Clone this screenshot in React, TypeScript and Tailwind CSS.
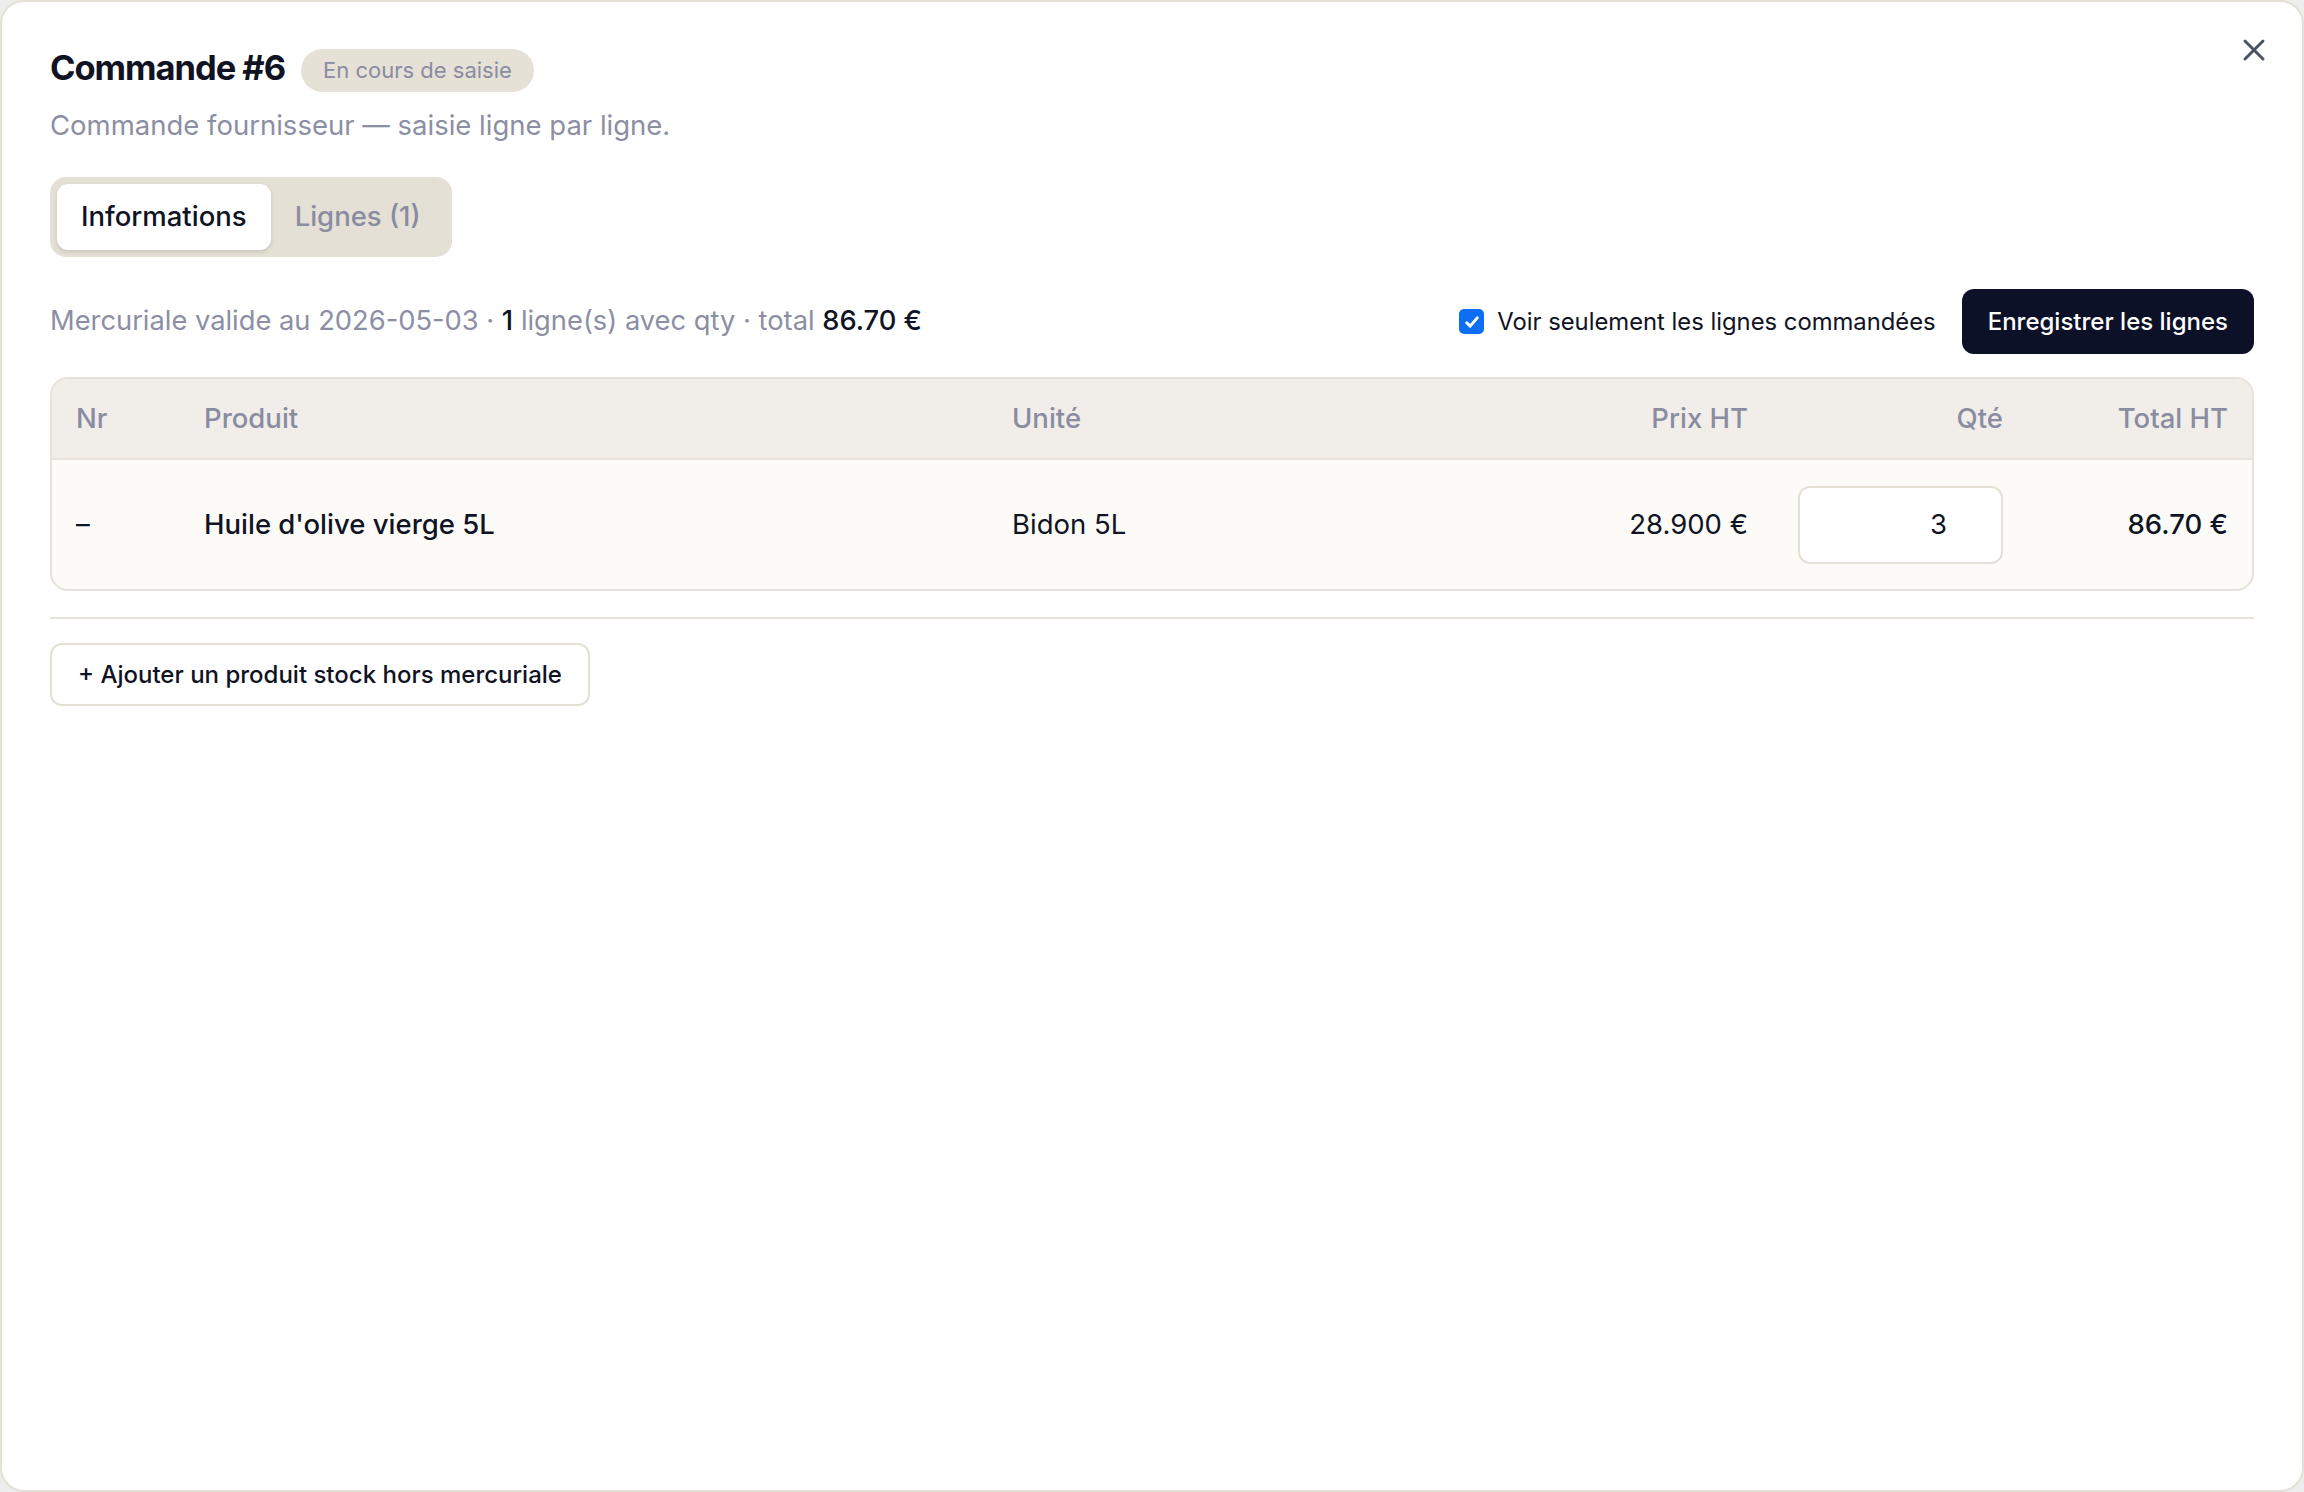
import { X } from 'lucide-react'

const font = { fontFamily: 'Inter, "Noto Sans", sans-serif' }

function Checkbox() {
  return (
    <span className="w-[25px] h-[25px] rounded-[5px] bg-[#0b6ef5] flex items-center justify-center shrink-0">
      <svg width="18" height="18" viewBox="0 0 24 24" fill="none" stroke="white" strokeWidth={4} strokeLinecap="round" strokeLinejoin="round">
        <path d="M5 13l4.5 4.5L19 6.5" />
      </svg>
    </span>
  )
}

export default function App() {
  return (
    <div className="w-[2304px] h-[1492px] bg-[#ededed]" style={font}>
      <div className="relative w-full h-full bg-white border-2 border-[#e4e0d6] rounded-[24px] px-[48px] pt-[41px] text-[#0f1324]">
        <button className="absolute top-[30px] right-[30px] text-[#4b5263]">
          <X size={36} strokeWidth={2} />
        </button>

        {/* header */}
        <div className="flex items-center gap-[16px]">
          <h1 className="text-[34.5px] leading-[44px] font-bold tracking-[-0.03em]">Commande #6</h1>
          <span className="mt-[6px] h-[43px] px-[22px] rounded-full bg-[#e6e1d6] text-[#8a8ca1] text-[22px] flex items-center">
            En cours de saisie
          </span>
        </div>
        <p className="mt-[13px] text-[27.5px] leading-[41px] text-[#8c8fa3]">
          Commande fournisseur — saisie ligne par ligne.
        </p>

        {/* tabs */}
        <div className="mt-[31px] inline-flex p-[7px] rounded-[16px] bg-[#e5e0d5]">
          <button className="h-[66px] px-[24px] rounded-[11px] bg-white shadow-[0_2px_4px_rgba(0,0,0,0.12)] text-[27.5px] font-medium text-[#0f1324]">
            Informations
          </button>
          <button className="h-[66px] px-[24px] text-[27.5px] font-medium text-[#8a8ca1]">
            Lignes (1)
          </button>
        </div>

        {/* info row */}
        <div className="mt-[32px] flex items-center justify-between">
          <p className="text-[27.3px] text-[#8c8fa3]">
            Mercuriale valide au 2026-05-03 · <span className="text-[#0f1324] font-medium">1</span> ligne(s) avec qty · total{' '}
            <span className="text-[#0f1324] font-medium">86.70 €</span>
          </p>
          <div className="flex items-center gap-[26px]">
            <label className="flex items-center gap-[13px] text-[23.8px] text-[#0f1324]">
              <Checkbox />
              Voir seulement les lignes commandées
            </label>
            <button className="h-[65px] px-[26px] rounded-[12px] bg-[#0d1128] text-white text-[24px] font-medium">
              Enregistrer les lignes
            </button>
          </div>
        </div>

        {/* table */}
        <div className="mt-[23px] border-2 border-[#e6e2d9] rounded-[18px] overflow-hidden">
          <table className="w-full border-collapse table-fixed">
            <colgroup>
              <col className="w-[128px]" />
              <col className="w-[808px]" />
              <col />
              <col className="w-[260px]" />
              <col className="w-[255px]" />
              <col className="w-[225px]" />
            </colgroup>
            <thead>
              <tr className="h-[80px] bg-[#f1eee9] text-[27.5px] text-[#8a8ca1] border-b-2 border-[#e6e2d9]">
                <th className="px-[24px] text-left font-medium">Nr</th>
                <th className="px-[24px] text-left font-medium">Produit</th>
                <th className="px-[24px] text-left font-medium">Unité</th>
                <th className="px-[24px] text-right font-medium">Prix HT</th>
                <th className="px-[24px] text-right font-medium">Qté</th>
                <th className="px-[24px] text-right font-medium">Total HT</th>
              </tr>
            </thead>
            <tbody>
              <tr className="h-[130px] bg-[#fcfbf8] text-[27.5px] text-[#0f1324]">
                <td className="px-[24px]">–</td>
                <td className="px-[24px] font-medium">Huile d'olive vierge 5L</td>
                <td className="px-[24px]">Bidon 5L</td>
                <td className="px-[24px] text-right">28.900 €</td>
                <td className="px-[24px]">
                  <div className="ml-auto w-[205px] h-[78px] bg-white border-2 border-[#e4e0d6] rounded-[12px] flex items-center justify-end pr-[54px]">
                    3
                  </div>
                </td>
                <td className="px-[24px] text-right font-medium">86.70 €</td>
              </tr>
            </tbody>
          </table>
        </div>

        <div className="mt-[26px] border-t-2 border-[#e6e2d9]" />

        <button className="mt-[24px] h-[63px] px-[26px] rounded-[12px] border-2 border-[#e4e0d6] bg-white text-[24px] font-medium text-[#0f1324]">
          + Ajouter un produit stock hors mercuriale
        </button>
      </div>
    </div>
  )
}
